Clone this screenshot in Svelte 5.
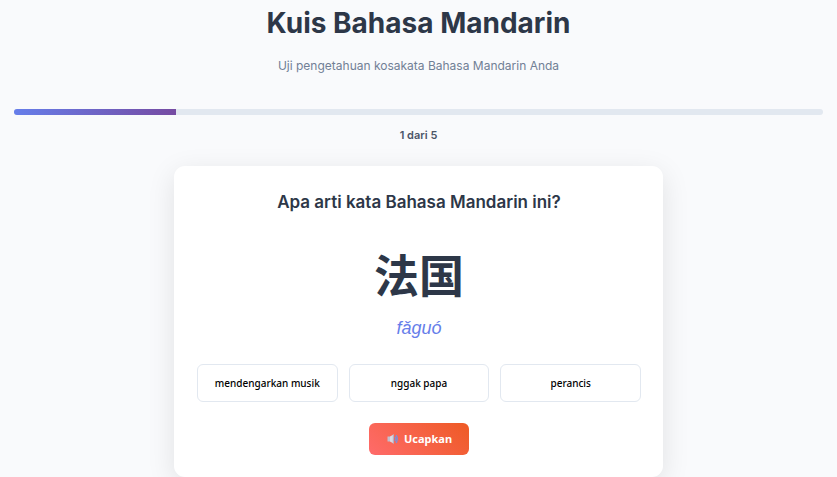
<script>
  const total = 5;
  let current = $state(1);
  let selected = $state(null);
  const question = {
    hanzi: '法国',
    pinyin: 'fǎguó',
    options: ['mendengarkan musik', 'nggak papa', 'perancis']
  };
  const percent = $derived((current / total) * 100);

  function speak() {
    const utterance = new SpeechSynthesisUtterance(question.hanzi);
    utterance.lang = 'zh-CN';
    speechSynthesis.speak(utterance);
  }
</script>

<main class="quiz">
  <header>
    <h1>Kuis Bahasa Mandarin</h1>
    <p class="subtitle">Uji pengetahuan kosakata Bahasa Mandarin Anda</p>
  </header>

  <div class="track" role="progressbar" aria-label="Kemajuan kuis" aria-valuemin="0" aria-valuemax={total} aria-valuenow={current}>
    <div class="fill" style="width: {percent}%"></div>
  </div>
  <p class="count">{current} dari {total}</p>

  <section class="card">
    <h2>Apa arti kata Bahasa Mandarin ini?</h2>
    <div class="hanzi" lang="zh-CN">{question.hanzi}</div>
    <div class="pinyin">{question.pinyin}</div>
    <div class="options">
      {#each question.options as option}
        <button type="button" class="option" class:selected={selected === option} onclick={() => (selected = option)}>{option}</button>
      {/each}
    </div>
    <button type="button" class="speak" onclick={speak}>
      <svg viewBox="0 0 12 12" width="12" height="12" aria-hidden="true">
        <path d="M1.500 3.500h3v5h-3z" fill="#c3bfce" />
        <path d="M4 3.500L7.500 1.500v9L4 8.500z" fill="#dcd9e3" />
        <path d="M6.800 1.600h1.200v8.800H6.800z" fill="#b4b0c2" />
        <path d="M9.200 4.200q1 1.800 0 3.600M10.400 2.600q1.800 3.400 0 6.800" fill="none" stroke="#6f93e6" stroke-width="1.200" stroke-linecap="round" />
      </svg>
      <span>Ucapkan</span>
    </button>
  </section>
</main>

<style>
  :global(body) {
    background: #f9fafc;
    font-family: Inter, 'Liberation Sans', sans-serif;
    color: #2d3748;
  }

  .quiz {
    padding: 0 14px;
    text-align: center;
  }

  h1,
  h2,
  p {
    margin: 0;
  }

  h1 {
    padding-top: 4px;
    font-size: 28px;
    line-height: 38px;
    font-weight: 700;
  }

  .subtitle {
    margin-top: 14px;
    font-size: 12px;
    line-height: 20px;
    color: #718096;
  }

  .track {
    height: 6px;
    margin-top: 33px;
    border-radius: 3px;
    background: #e2e8f0;
    overflow: hidden;
  }

  .fill {
    height: 100%;
    background: linear-gradient(90deg, #667eea, #764ba2);
  }

  .count {
    margin-top: 11px;
    font-size: 11px;
    line-height: 18px;
    font-weight: 600;
    color: #4a5568;
  }

  .card {
    box-sizing: border-box;
    max-width: 489px;
    margin: 22px auto 0;
    padding: 22px 22px 22px 23px;
    border-radius: 11px;
    background: #fff;
    box-shadow: 0 7px 28px rgba(0, 0, 0, 0.1);
  }

  h2 {
    font-size: 17px;
    line-height: 28px;
    font-weight: 600;
  }

  .hanzi {
    margin-top: 25px;
    font-family: Inter, 'Noto Sans CJK SC', sans-serif;
    font-size: 45px;
    line-height: 72px;
    font-weight: 700;
  }

  .pinyin {
    margin-top: 1px;
    font-family: 'Liberation Sans', sans-serif;
    font-size: 18px;
    line-height: 28px;
    font-style: italic;
    color: #667eea;
  }

  .options {
    display: grid;
    grid-template-columns: repeat(3, 1fr);
    gap: 11px;
    margin-top: 22px;
  }

  button {
    font-family: 'Noto Sans', sans-serif;
    line-height: 16px;
    cursor: pointer;
  }

  .option {
    padding: 10px 11px;
    border: 1px solid #e2e8f0;
    border-radius: 6px;
    background: #fff;
    color: #000;
    font-size: 10px;
    font-weight: 500;
  }

  .option:hover,
  .selected {
    border-color: #667eea;
  }

  .speak {
    display: inline-flex;
    align-items: center;
    gap: 6px;
    margin-top: 21px;
    padding: 8px 17px;
    border: 0;
    border-radius: 6px;
    background: linear-gradient(45deg, #ff6b6b, #ee5a24);
    color: #fff;
    font-size: 11px;
    font-weight: 700;
  }
</style>
